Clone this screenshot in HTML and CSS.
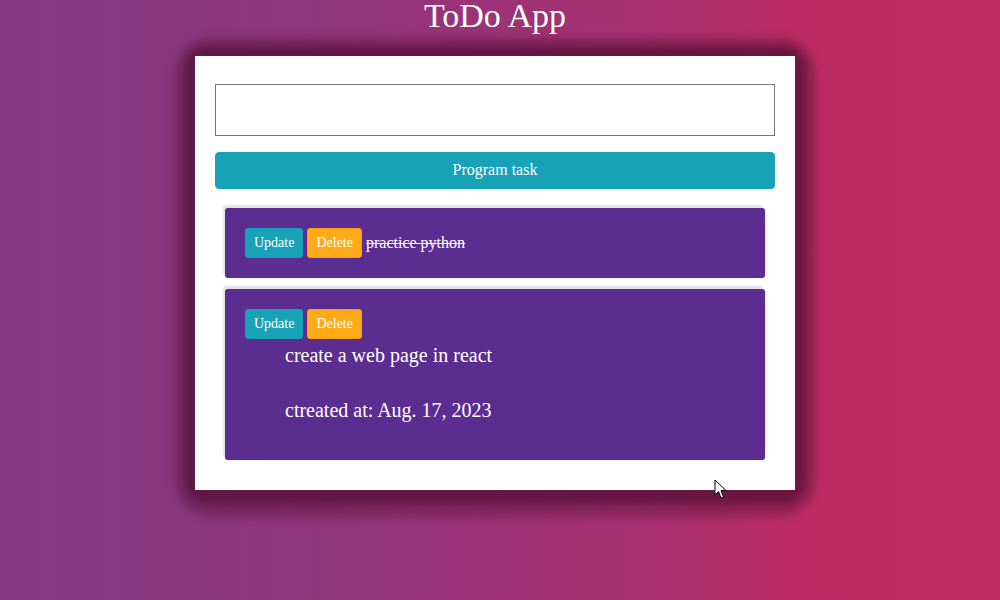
FILE: index.html
```html
<!DOCTYPE html>
<html>
<head>
<meta charset="utf-8">
<title>ToDo App</title>
<link rel="stylesheet" href="styles.css">
</head>
<body>
<div class="page">
  <h1 class="title">ToDo App</h1>
  <main class="card">
    <input class="task-input" type="text">
    <button class="btn btn-info btn-block">Program task</button>
    <div class="list">
      <div class="item">
        <div class="row">
          <button class="btn btn-sm btn-info">Update</button>
          <button class="btn btn-sm btn-warning">Delete</button>
          <span class="done">practice python</span>
        </div>
      </div>
      <div class="item">
        <div class="row">
          <button class="btn btn-sm btn-info">Update</button>
          <button class="btn btn-sm btn-warning">Delete</button>
        </div>
        <div class="details">
          <p>create a web page in react</p>
          <p>ctreated at: Aug. 17, 2023</p>
        </div>
      </div>
    </div>
  </main>
</div>
<svg class="cursor" width="13" height="21" viewBox="0 0 13 21"><path d="M1 1 L1 16 L4.5 12.5 L7 19 L9.5 18 L7 11.5 L12 11.5 Z" fill="#fff" stroke="#000" stroke-width="1" stroke-linejoin="round"/></svg>
</body>
</html>
```

FILE: styles.css
```css
html, body {
  margin: 0;
  height: 100%;
}
body {
  font-family: "Liberation Serif", "Times New Roman", serif;
  background: linear-gradient(to right, #843a80 0%, #8a377d 20%, #993379 45%, #a83070 65%, #bb2c62 80%, #c02c5f 100%);
  color: #fff;
  position: relative;
  overflow: hidden;
}
.page {
  padding-right: 10px;
}
.title {
  margin: 0;
  padding-top: 3px;
  font-size: 34px;
  font-weight: normal;
  line-height: 25px;
  text-align: center;
}
.card {
  position: relative;
  width: 560px;
  margin: 28px auto 0;
  background: #fff;
  padding: 28px 20px 30px;
  display: flex;
  flex-direction: column;
}
.card::before {
  content: "";
  position: absolute;
  inset: -18px -20px -26px -20px;
  border-radius: 36px;
  background: rgba(80, 15, 50, 0.42);
  filter: blur(4px);
  z-index: -1;
}
.card::after {
  content: "";
  position: absolute;
  inset: -9px -10px -13px -10px;
  border-radius: 22px;
  background: rgba(85, 15, 55, 0.6);
  filter: blur(3px);
  z-index: -1;
}
.task-input {
  height: 52px;
  box-sizing: border-box;
  border: 1px solid #767676;
  margin: 0;
  padding: 0;
}
.btn {
  font-family: "Liberation Serif", "Times New Roman", serif;
  color: #fff;
  border: 1px solid transparent;
  border-radius: 4px;
  cursor: pointer;
}
.btn-block {
  margin-top: 16px;
  font-size: 16px;
  line-height: 24px;
  padding: 5px 12px 6px;
}
.btn-info {
  background: #17a2b8;
  border-color: #17a2b8;
}
.btn-warning {
  background: #ffab19;
  border-color: #f5a212;
}
.btn-sm {
  font-size: 14px;
  line-height: 20px;
  padding: 4px 8px;
  border-radius: 3px;
}
.list {
  margin: 19px 10px 0;
  display: flex;
  flex-direction: column;
  gap: 11px;
}
.item {
  background: #5c2d91;
  border-radius: 3px;
  padding: 20px;
  box-shadow: -2px -3px 2px #e2e2e2, 1px 0 2px #e8e8e8;
}
.row {
  display: flex;
  align-items: center;
  gap: 4px;
}
.done {
  font-size: 16px;
  text-decoration: line-through;
}
.details {
  padding: 5px 0 18px 40px;
  display: flex;
  flex-direction: column;
  gap: 32px;
}
.details p {
  margin: 0;
  font-size: 20px;
  line-height: 23px;
}
.cursor {
  position: absolute;
  left: 714px;
  top: 479px;
}
```
